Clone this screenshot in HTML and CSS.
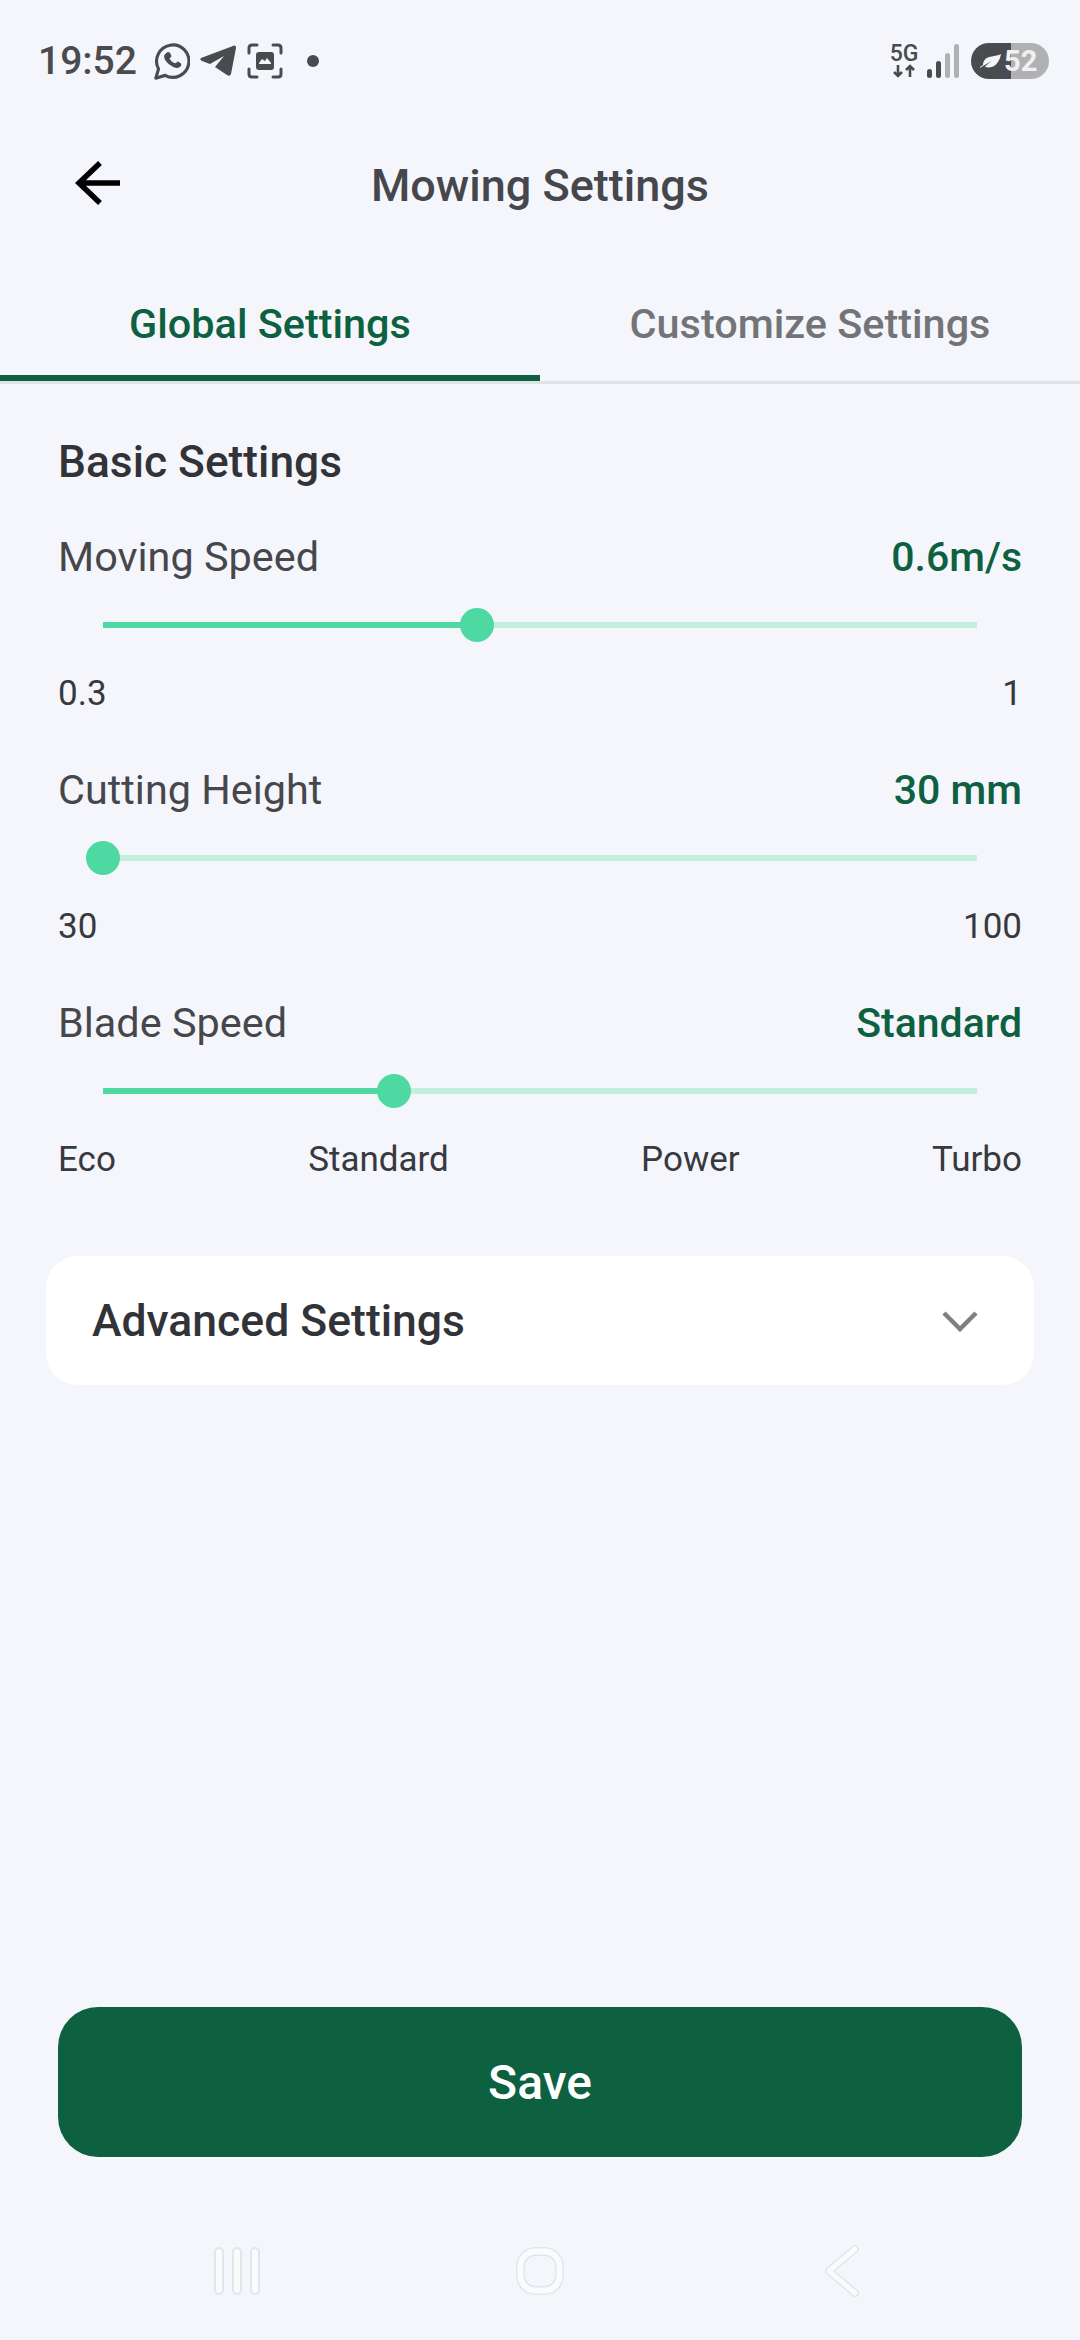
FILE: index.html
```html
<!DOCTYPE html>
<html lang="en">
<head>
    <meta charset="UTF-8">
    <meta name="viewport" content="width=device-width, initial-scale=1.0">
    <title>Mowing Settings</title>
    <link rel="stylesheet" href="styles.css">
</head>
<body>
    <div class="phone">
        <div class="status-bar">
            <div class="status-left">
                <span class="time">19:52</span>
                <svg class="icon-wa" width="37" height="37" viewBox="0 0 40 40">
                    <path d="M3 38l3-10A17.5 17.5 0 1 1 13 35z" fill="none" stroke="#4a4b4f" stroke-width="3.4" stroke-linejoin="round"/>
                    <path d="M14 11c2-2 4-2 5 1l1 2c0 1-2 2-2 3 1 2 3 4 6 5 1 0 2-2 3-2l3 2c1 1 1 3-1 4-3 2-6 1-10-2-5-3-7-7-7-10 0-1 1-2 2-3z" fill="#4a4b4f"/>
                </svg>
                <svg class="icon-tg" width="36" height="32" viewBox="0 0 36 32">
                    <path d="M1 13L33 1c2-1 3 0 3 2L31 29c-1 2-2 2-4 1l-12-8 9-11-14 8-8-3c-2-1-2-2-1-3z" fill="#4a4b4f"/>
                </svg>
                <svg class="icon-shot" width="36" height="36" viewBox="0 0 36 36">
                    <path d="M2 10V5q0-3 3-3h5M26 2h5q3 0 3 3v5M34 26v5q0 3-3 3h-5M10 34H5q-3 0-3-3v-5" fill="none" stroke="#4a4b4f" stroke-width="3" stroke-linecap="round"/>
                    <path d="M9 12q0-3 3-3h12q3 0 3 3v12q0 3-3 3H12q-3 0-3-3z" fill="#4a4b4f"/>
                    <path d="M12 20l3-4 3 2 2-3 4 5v1H12z" fill="#f5f6fb"/>
                </svg>
                <span class="dot"></span>
            </div>
            <div class="status-right">
                <div class="net">
                    <span class="net-label">5G</span>
                    <svg width="24" height="14" viewBox="0 0 24 14">
                        <path d="M6 1v11M2 8l4 4 4-4M18 13V2M14 6l4-4 4 4" fill="none" stroke="#4a4b4f" stroke-width="2.6"/>
                    </svg>
                </div>
                <svg class="signal" width="32" height="34" viewBox="0 0 32 34">
                    <rect x="0" y="25" width="5" height="9" rx="2.5" fill="#4a4b4f"/>
                    <rect x="9" y="17" width="5" height="17" rx="2.5" fill="#4a4b4f"/>
                    <rect x="18" y="9" width="5" height="25" rx="2.5" fill="#b0b1b3"/>
                    <rect x="27" y="0" width="5" height="34" rx="2.5" fill="#b0b1b3"/>
                </svg>
                <div class="battery">
                    <svg class="leaf" width="21" height="15" viewBox="0 0 21 15">
                        <path d="M0 14C4 11 8 9 12 7 9 9 6 11 5 13 12 15 19 11 21 0 16 3 7 1 4 7 3 9 3 10 3 11L0 13z" fill="#f5f6fb"/>
                    </svg>
                    <span class="battery-text">52</span>
                </div>
            </div>
        </div>

        <div class="top-bar">
            <svg class="back" width="46" height="44" viewBox="0 0 46 44">
                <path d="M45 22H4M25 2L4 22l21 20" fill="none" stroke="#000" stroke-width="5.5"/>
            </svg>
            <h1>Mowing Settings</h1>
        </div>

        <div class="tabs">
            <div class="tab active">Global Settings</div>
            <div class="tab">Customize Settings</div>
        </div>

        <div class="content">
            <h2>Basic Settings</h2>

            <div class="setting">
                <div class="setting-head"><span>Moving Speed</span><b>0.6m/s</b></div>
                <div class="slider">
                    <div class="fill" style="width: 374px"></div>
                    <div class="thumb" style="left: 374px"></div>
                </div>
                <div class="scale"><span>0.3</span><span>1</span></div>
            </div>

            <div class="setting">
                <div class="setting-head"><span>Cutting Height</span><b>30 mm</b></div>
                <div class="slider">
                    <div class="fill" style="width: 0"></div>
                    <div class="thumb" style="left: 0"></div>
                </div>
                <div class="scale"><span>30</span><span>100</span></div>
            </div>

            <div class="setting">
                <div class="setting-head"><span>Blade Speed</span><b>Standard</b></div>
                <div class="slider">
                    <div class="fill" style="width: 291px"></div>
                    <div class="thumb" style="left: 291px"></div>
                </div>
                <div class="scale"><span>Eco</span><span>Standard</span><span>Power</span><span>Turbo</span></div>
            </div>

            <div class="card">
                <span>Advanced Settings</span>
                <svg width="36" height="22" viewBox="0 0 36 22">
                    <path d="M2 3l16 16L34 3" fill="none" stroke="#808080" stroke-width="4.5"/>
                </svg>
            </div>
        </div>

        <button class="save">Save</button>

        <div class="nav-bar">
            <svg width="46" height="50" viewBox="0 0 46 50">
                <g fill="#fafbfd" stroke="#e4e5e9" stroke-width="2">
                    <rect x="1" y="2" width="8" height="46" rx="4"/>
                    <rect x="19" y="2" width="8" height="46" rx="4"/>
                    <rect x="37" y="2" width="8" height="46" rx="4"/>
                </g>
            </svg>
            <svg width="50" height="50" viewBox="0 0 50 50">
                <rect x="5.5" y="5.5" width="39" height="39" rx="15" fill="none" stroke="#e4e5e9" stroke-width="9"/>
                <rect x="5.5" y="5.5" width="39" height="39" rx="15" fill="none" stroke="#fafbfd" stroke-width="6"/>
            </svg>
            <svg class="nav-back" width="36" height="52" viewBox="0 0 36 52">
                <path d="M31 4L5 26l26 22" fill="none" stroke="#e4e5e9" stroke-width="8" stroke-linecap="round" stroke-linejoin="round"/>
                <path d="M31 4L5 26l26 22" fill="none" stroke="#fafbfd" stroke-width="5" stroke-linecap="round" stroke-linejoin="round"/>
            </svg>
        </div>
    </div>
</body>
</html>
```

FILE: styles.css
```css
* {
    box-sizing: border-box;
}
body {
    margin: 0;
    background-color: #f5f6fb;
    font-family: Roboto, "Liberation Sans", sans-serif;
}
.phone {
    width: 1080px;
    height: 2340px;
    display: flex;
    flex-direction: column;
    overflow: hidden;
}
.status-bar {
    height: 122px;
    padding: 0 31px 0 38px;
    display: flex;
    align-items: center;
    justify-content: space-between;
}
.status-left, .status-right {
    display: flex;
    align-items: center;
}
.time {
    font-size: 39px;
    font-weight: 500;
    color: #4a4b4f;
    margin-right: 16px;
}
.icon-tg {
    margin-left: 10px;
}
.icon-shot {
    margin-left: 11px;
}
.dot {
    width: 12px;
    height: 12px;
    border-radius: 50%;
    background-color: #4a4b4f;
    margin-left: 24px;
}
.net {
    display: flex;
    flex-direction: column;
    align-items: center;
    width: 30px;
}
.net-label {
    font-size: 23px;
    font-weight: 500;
    line-height: 20px;
    color: #4a4b4f;
}
.signal {
    margin-left: 8px;
}
.battery {
    margin-left: 12px;
    width: 78px;
    height: 36px;
    border-radius: 18px;
    background: linear-gradient(to right, #4a4b4f 0, #4a4b4f 40px, #b0b1b3 40px);
    display: flex;
    align-items: center;
    padding-left: 9px;
}
.battery-text {
    font-size: 29px;
    font-weight: 700;
    color: #f1f1f3;
    margin-left: 3px;
}
.top-bar {
    height: 126px;
    display: flex;
    align-items: center;
    justify-content: center;
    position: relative;
}
.back {
    position: absolute;
    left: 75px;
    top: 39px;
}
h1 {
    margin: 0;
    font-size: 45px;
    font-weight: 500;
    color: #46474c;
}
.tabs {
    height: 136px;
    display: flex;
    border-bottom: 3px solid #e1e2e6;
}
.tab {
    width: 540px;
    height: 133px;
    padding-top: 19px;
    display: flex;
    align-items: center;
    justify-content: center;
    font-size: 41.4px;
    font-weight: 500;
    color: #737478;
}
.tab.active {
    padding-top: 25px;
    color: #0d6040;
    border-bottom: 6px solid #0d6040;
}
.content {
    padding: 0 58px;
    flex: 1;
}
h2 {
    margin: 53px 0 0;
    font-size: 44.3px;
    line-height: 50px;
    font-weight: 500;
    color: #323338;
}
.setting {
    height: 233px;
}
.setting-head {
    padding-top: 46px;
    display: flex;
    justify-content: space-between;
    font-size: 41.4px;
    line-height: 48px;
    color: #46474c;
}
.setting-head b {
    font-size: 41px;
    font-weight: 500;
    color: #0d6040;
}
.slider {
    position: relative;
    margin: 41px 45px 0;
    height: 6px;
    background-color: #c2f0dc;
}
.fill {
    height: 6px;
    background-color: #4ed8a2;
}
.thumb {
    position: absolute;
    top: -14px;
    width: 34px;
    height: 34px;
    margin-left: -17px;
    border-radius: 50%;
    background-color: #4ed8a2;
}
.scale {
    margin-top: 46px;
    display: flex;
    justify-content: space-between;
    font-size: 35px;
    line-height: 40px;
    color: #38393e;
}
.card {
    margin: 70px -12px 0;
    height: 129px;
    padding: 0 56px 0 46px;
    border-radius: 32px;
    background-color: #fff;
    display: flex;
    align-items: center;
    justify-content: space-between;
    font-size: 44.5px;
    font-weight: 500;
    color: #323338;
}
.save {
    margin: 0 58px;
    height: 150px;
    border: none;
    border-radius: 40px;
    background-color: #0d6040;
    color: #fff;
    font-family: inherit;
    font-size: 48px;
    font-weight: 500;
}
.nav-bar {
    height: 183px;
    padding: 44px 0 0 214px;
    display: flex;
    align-items: center;
    gap: 255px;
}
.nav-back {
    margin-left: 4px;
}
```
